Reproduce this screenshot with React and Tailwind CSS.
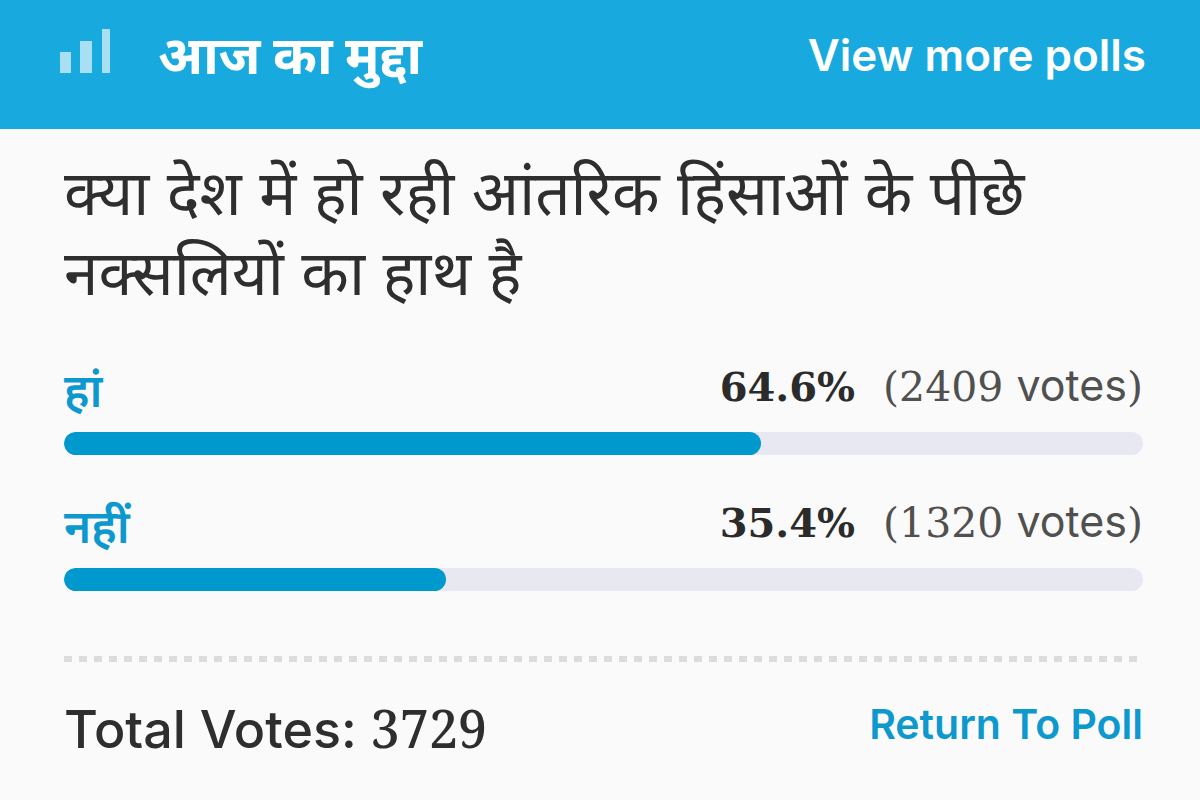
const OPTIONS = [
  { id: "yes", label: "हां", percent: 64.6, votes: 2409 },
  { id: "no", label: "नहीं", percent: 35.4, votes: 1320 },
];

function PollIcon() {
  return (
    <svg viewBox="0 0 50 44" className="w-[50px] h-11 mb-2 shrink-0" fill="#a9dff2" aria-hidden="true">
      <rect x="0" y="23" width="11" height="21" />
      <rect x="20" y="12" width="12" height="32" />
      <rect x="42" y="0" width="8" height="44" />
    </svg>
  );
}

function PollOption({ option }) {
  return (
    <li>
      <div className="flex items-center justify-between h-[60px]">
        <span
          id={`label-${option.id}`}
          className="pt-2 text-[46px] leading-[60px] font-semibold text-[#0d98ce]"
        >
          {option.label}
        </span>
        <span className="flex items-baseline gap-7 font-['DejaVu_Serif',serif] text-[40px] leading-[60px]">
          <b className="text-[#2b2b2b]">{option.percent}%</b>
          <span className="text-[41px] text-[#505050]">
            ({option.votes} <span className="font-['Inter',sans-serif] text-[43px]">votes</span>)
          </span>
        </span>
      </div>
      <div
        role="progressbar"
        aria-labelledby={`label-${option.id}`}
        aria-valuenow={option.percent}
        className="mt-4 h-[23px] rounded-full bg-[#e8e8f3] overflow-hidden"
      >
        <div className="h-full rounded-full bg-[#0099ce]" style={{ width: `${option.percent}%` }} />
      </div>
    </li>
  );
}

export default function App() {
  return (
    <main className="min-h-screen bg-[#fafafa] font-['Inter','Noto_Sans_Devanagari','Noto_Sans',sans-serif] text-[#2e2e2e]">
      <header className="flex items-center justify-between pl-[60px] pr-[54px] pt-2.5 pb-[29px] bg-[#18aade] text-white">
        <div className="flex items-center gap-12">
          <PollIcon />
          <h1 className="text-[53px] leading-[90px] font-bold">आज का मुद्दा</h1>
        </div>
        <a href="#polls" className="text-[44px] font-semibold">
          View more polls
        </a>
      </header>

      <section className="pl-16 pr-[57px]">
        <h2 className="pt-6 text-[62px] leading-[80px]">
          क्या देश में हो रही आंतरिक हिंसाओं के पीछे नक्सलियों का हाथ है
        </h2>
        <ul className="mt-[43px] space-y-[37px]">
          {OPTIONS.map((option) => (
            <PollOption key={option.id} option={option} />
          ))}
        </ul>

        {/* Dashed divider */}
        <div className="mt-[65px] h-1.5 bg-[repeating-linear-gradient(to_right,#dcdcdc_0_8px,transparent_8px_15px)]" />

        <footer className="mt-[30px] flex items-start justify-between">
          <p className="text-[52px] leading-[72px] font-medium">
            Total Votes: <span className="font-['Noto_Serif',serif]">3729</span>
          </p>
          <a href="#poll" className="pt-0.5 text-[41px] leading-[60px] font-semibold text-[#0d98ce]">
            Return To Poll
          </a>
        </footer>
      </section>
    </main>
  );
}
